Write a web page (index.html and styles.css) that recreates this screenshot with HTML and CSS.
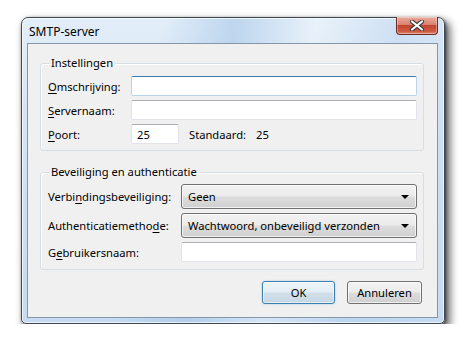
FILE: index.html
```html
<!DOCTYPE html>
<html lang="nl">
<head>
    <meta charset="UTF-8">
    <title>SMTP-server</title>
    <link rel="stylesheet" href="styles.css">
</head>
<body>
    <div class="window">
        <div class="titlebar">
            <span class="title">SMTP-server</span>
            <button class="close" aria-label="Sluiten">
                <svg width="16" height="11" viewBox="0 0 16 11">
                    <path d="M3 1.5 L13 9.5 M13 1.5 L3 9.5" stroke="#3b3b3b" stroke-width="4.2" stroke-linecap="round"/>
                    <path d="M3 1.5 L13 9.5 M13 1.5 L3 9.5" stroke="#ffffff" stroke-width="2.2" stroke-linecap="round"/>
                </svg>
            </button>
        </div>
        <div class="client">
            <fieldset class="group group-settings">
                <legend>Instellingen</legend>
                <label class="lbl"><u>O</u>mschrijving:</label>
                <input class="field focused" type="text">
                <label class="lbl"><u>S</u>ervernaam:</label>
                <input class="field" type="text">
                <label class="lbl"><u>P</u>oort:</label>
                <div class="port-row">
                    <input class="field port" type="text" value="25">
                    <span class="default-lbl">Standaard:</span>
                    <span class="default-val">25</span>
                </div>
            </fieldset>

            <fieldset class="group group-security">
                <legend>Beveiliging en authenticatie</legend>
                <label class="lbl">Verbi<u>n</u>dingsbeveiliging:</label>
                <div class="combo"><span>Geen</span><i class="arrow"></i></div>
                <label class="lbl">Authenticatiemetho<u>d</u>e:</label>
                <div class="combo"><span>Wachtwoord, onbeveiligd verzonden</span><i class="arrow"></i></div>
                <label class="lbl">G<u>e</u>bruikersnaam:</label>
                <input class="field" type="text">
            </fieldset>

            <div class="buttons">
                <button class="btn btn-default">OK</button>
                <button class="btn">Annuleren</button>
            </div>
        </div>
    </div>
</body>
</html>
```

FILE: styles.css
```css
body {
    margin: 0;
    padding: 17px 0 0 21px;
    background: #ffffff;
    font-family: 'Noto Sans', 'Open Sans', sans-serif;
    font-size: 11.2px;
    color: #000;
}

.window {
    box-sizing: border-box;
    width: 424px;
    height: 307px;
    border: 1px solid #3e4853;
    border-radius: 7px 7px 5px 5px;
    padding: 0 6px 5px 5px;
    display: flex;
    flex-direction: column;
    background:
        linear-gradient(100deg, rgba(255,255,255,0) 0%, rgba(255,255,255,0) 30%, rgba(160,195,230,0.55) 45%, rgba(255,255,255,0.25) 62%, rgba(170,200,235,0.35) 80%, rgba(255,255,255,0) 100%),
        linear-gradient(180deg, #e2edf8 0%, #d2e3f4 40%, #c6dbf1 100%);
    box-shadow: 4px 5px 9px 1px rgba(0,0,0,0.6), 1px 1px 3px rgba(0,0,0,0.5), inset 0 0 0 1px rgba(255,255,255,0.7);
}

.titlebar {
    height: 25px;
    display: flex;
    justify-content: space-between;
    align-items: flex-start;
}

.title {
    padding: 6px 0 0 2px;
    line-height: 16px;
    font-size: 12px;
}

.close {
    width: 42px;
    height: 18px;
    margin-top: -1px;
    padding: 0;
    border: 1px solid #6d2a22;
    border-top: none;
    border-radius: 0 0 4px 4px;
    background: linear-gradient(180deg, #eaa99b 0%, #d98271 45%, #c4452e 50%, #cf5a43 85%, #e28f75 100%);
    display: flex;
    align-items: center;
    justify-content: center;
    box-shadow: inset 0 0 0 1px rgba(255,255,255,0.35);
}

.client {
    flex: 1;
    background: #f0f0f0;
    border: 1px solid #8496a8;
    padding: 12px 13px 13px 12px;
    display: flex;
    flex-direction: column;
}

.group {
    margin: 0;
    border: 1px solid #d5dfe5;
    border-radius: 3px;
    box-shadow: inset 1px 1px 0 #ffffff;
    display: grid;
    align-items: center;
}

.group legend {
    padding: 0 2px 0 1px;
    margin-left: 2px;
    line-height: 14px;
}

.group-settings {
    padding: 6px 6px 6px 7px;
    grid-template-columns: 83px 1fr;
    grid-auto-rows: 20px;
    row-gap: 4px;
}

.group-security {
    margin-top: 14px;
    padding: 5px 6px 7px 7px;
    grid-template-columns: 133px 1fr;
    grid-template-rows: 25px 25px 20px;
    row-gap: 4px;
}

.lbl u {
    text-decoration-thickness: 1px;
    text-underline-offset: 2px;
}

.field {
    box-sizing: border-box;
    height: 20px;
    width: 100%;
    margin: 0;
    padding: 0 4px;
    font: inherit;
    background: #ffffff;
    border: 1px solid #e2e3ea;
    border-top-color: #abadb3;
    border-radius: 2px;
    outline: none;
}

.field.focused {
    border-color: #b7d4ec;
    border-top-color: #3d7bad;
}

.port-row {
    display: flex;
    align-items: center;
}

.field.port {
    width: 48px;
    padding-left: 5px;
}

.default-lbl {
    margin-left: 10px;
    width: 67px;
}

.combo {
    box-sizing: border-box;
    height: 25px;
    border: 1px solid #707070;
    border-radius: 3px;
    background: linear-gradient(180deg, #f2f2f2 0%, #ebebeb 48%, #dddddd 52%, #cfcfcf 100%);
    box-shadow: inset 0 0 0 1px rgba(255,255,255,0.7);
    display: flex;
    align-items: center;
    justify-content: space-between;
    padding: 0 7px 0 6px;
}

.arrow {
    width: 0;
    height: 0;
    border-left: 4px solid transparent;
    border-right: 4px solid transparent;
    border-top: 4px solid #000;
}

.buttons {
    margin-top: 11px;
    margin-right: 2px;
    display: flex;
    justify-content: flex-end;
    gap: 12px;
}

.btn {
    box-sizing: border-box;
    height: 23px;
    width: 75px;
    padding: 0;
    font: inherit;
    color: #000;
    border: 1px solid #707070;
    border-radius: 3px;
    background: linear-gradient(180deg, #f2f2f2 0%, #ebebeb 48%, #dddddd 52%, #cfcfcf 100%);
    box-shadow: inset 0 0 0 1px rgba(255,255,255,0.7);
}

.btn-default {
    width: 73px;
    border-color: #3c7fb1;
    background: linear-gradient(180deg, #eef5fa 0%, #e3edf4 48%, #d3e0ea 52%, #c5d6e3 100%);
    box-shadow: inset 0 0 0 1px rgba(255,255,255,0.6), 0 0 2px rgba(60,127,177,0.4);
}
```
